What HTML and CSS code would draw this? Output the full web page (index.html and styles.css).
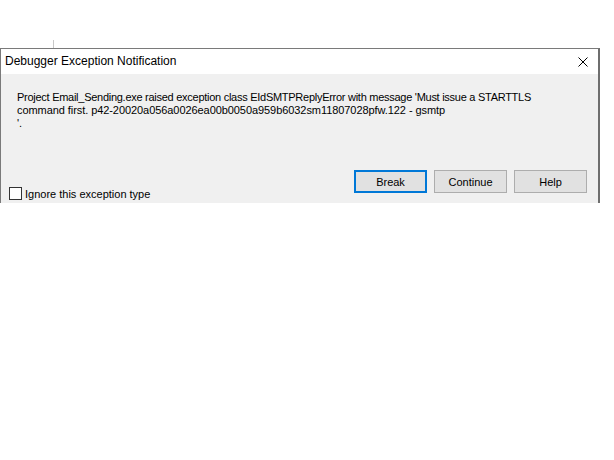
FILE: index.html
```html
<!DOCTYPE html>
<html>
<head>
<meta charset="utf-8">
<link rel="stylesheet" href="styles.css">
</head>
<body>
<div class="stage">
  <div class="tick"></div>
  <div class="dialog">
    <div class="titlebar">
      <span class="title">Debugger Exception Notification</span>
      <svg class="close" width="10" height="10" viewBox="0 0 10 10"><path d="M0.5 0.5 L9.5 9.5 M9.5 0.5 L0.5 9.5" stroke="#000" stroke-width="1" fill="none"/></svg>
    </div>
    <div class="content">
      <div class="message">
        <span class="line l1">Project Email_Sending.exe raised exception class EIdSMTPReplyError with message 'Must issue a STARTTLS</span>
        <span class="line l2">command first. p42-20020a056a0026ea00b0050a959b6032sm11807028pfw.122 - gsmtp</span>
        <span class="line">'.</span>
      </div>
      <div class="footer">
        <label class="ignore"><span class="box"></span>Ignore this exception type</label>
        <div class="buttons">
          <button class="btn default">Break</button>
          <button class="btn">Continue</button>
          <button class="btn">Help</button>
        </div>
      </div>
    </div>
  </div>
</div>
</body>
</html>
```

FILE: styles.css
```css
html, body {
  margin: 0;
  padding: 0;
  background: #ffffff;
}
body {
  font-family: "Liberation Sans", Arial, sans-serif;
  font-size: 11px;
  color: #000;
}
.stage {
  position: relative;
  padding-top: 48px;
  width: 614px;
  height: 460px;
  box-sizing: border-box;
}
.tick {
  position: absolute;
  left: 53px;
  top: 40px;
  width: 1px;
  height: 8px;
  background: #c8c8c8;
}
.dialog {
  width: 600px;
  box-sizing: border-box;
  border-top: 1px solid #7a7a7a;
  border-left: 1px solid #7a7a7a;
  border-right: 2px solid #6e6e6e;
}
.titlebar {
  height: 25px;
  background: #ffffff;
  display: flex;
  align-items: center;
  justify-content: space-between;
  padding: 0 10px 0 4px;
}
.title {
  font-size: 12px;
  position: relative;
  top: -1px;
}
.close {
  display: block;
}
.content {
  background: #f0f0f0;
  height: 129px;
  display: flex;
  flex-direction: column;
  padding: 17px 0 0 16px;
  box-sizing: border-box;
}
.message {
  flex: 1;
  line-height: 13px;
  white-space: nowrap;
}
.line {
  display: block;
}
.l1 {
  letter-spacing: -0.27px;
}
.l2 {
  letter-spacing: -0.07px;
}
.footer {
  height: 33px;
  display: flex;
  justify-content: space-between;
  margin-left: -8px;
}
.ignore {
  align-self: flex-end;
  display: flex;
  align-items: center;
  margin-bottom: 3px;
  height: 13px;
}
.box {
  width: 11px;
  height: 11px;
  border: 1px solid #333333;
  background: #ffffff;
  margin-right: 3px;
}
.buttons {
  display: flex;
  gap: 7px;
  margin-right: 11px;
  align-self: flex-start;
}
.btn {
  width: 73px;
  height: 23px;
  box-sizing: border-box;
  background: #e1e1e1;
  border: 1px solid #adadad;
  font-family: "Liberation Sans", Arial, sans-serif;
  font-size: 11px;
  color: #000;
  padding: 0;
  margin: 0;
}
.btn.default {
  border: 2px solid #0078d7;
}
```
